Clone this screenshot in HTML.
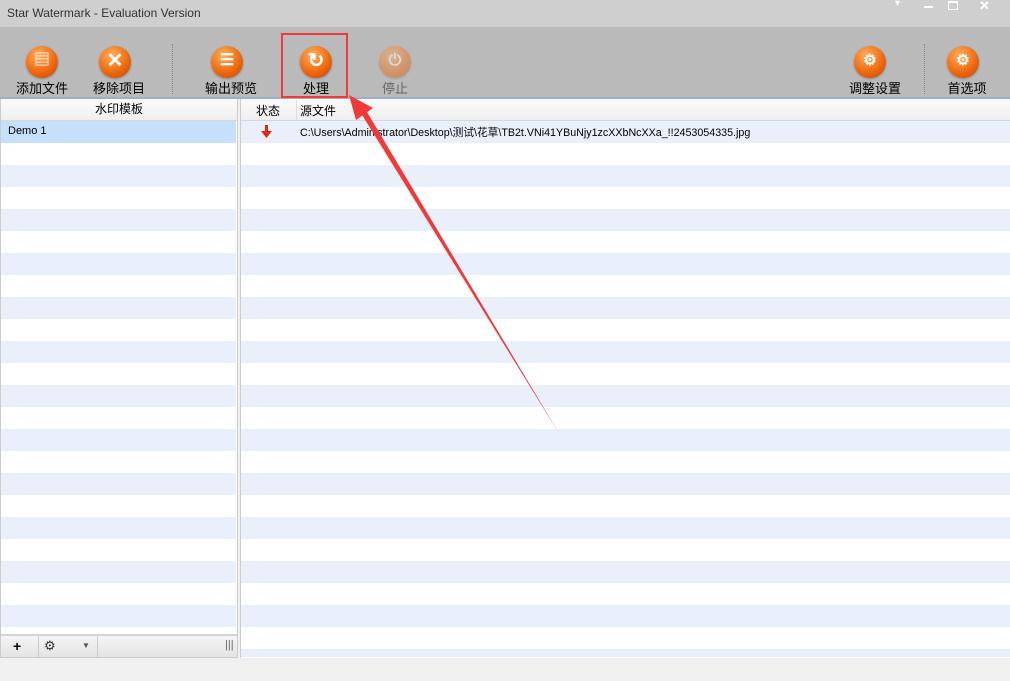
<!DOCTYPE html><html><head><meta charset="utf-8"><style>
*{margin:0;padding:0;box-sizing:border-box}
body{width:1010px;height:681px;overflow:hidden;background:#f0f0f0;font-family:"Liberation Sans","Noto Sans CJK SC",sans-serif;font-size:12px;color:#000;position:relative}
.abs{position:absolute}
.ic{position:absolute;width:32px;height:32px;border-radius:50%;background:radial-gradient(circle at 40% 30%,#ffb060,#f06a10 55%,#c84000);box-shadow:0 1px 2px rgba(0,0,0,.3);color:#fff;text-align:center;font-weight:bold}
.lb{position:absolute;top:78px;font-size:13px;text-align:center;width:80px}
.rows{position:absolute;background:repeating-linear-gradient(#e9f0fc 0 22px,#fff 22px 44px)}
.hdr{position:absolute;top:99px;height:22px;background:linear-gradient(#fafafa,#efefef);border-bottom:1px solid #d8d8d8;font-size:12px;line-height:21px}
</style></head><body>
<div class="abs" style="left:0;top:0;width:1010px;height:27px;background:#cfcfcf"></div>
<div class="abs" style="left:7px;top:6px;font-size:12px;color:#333">Star Watermark - Evaluation Version</div>
<div class="abs" style="left:895px;top:-2px;font-size:10px;color:#fff">▾</div>
<div class="abs" style="left:924px;top:6px;width:9px;height:2px;background:#fff"></div>
<div class="abs" style="left:948px;top:1px;width:10px;height:9px;border:1px solid #fff;border-top-width:2px"></div>
<div class="abs" style="left:979px;top:-2px;color:#fff;font-size:13px;font-weight:bold">✕</div>
<div class="abs" style="left:0;top:27px;width:1010px;height:70px;background:#bababa"></div>
<div class="abs" style="left:0;top:97px;width:1010px;height:2px;background:#9eb0c4"></div>
<div class="abs" style="left:172px;top:44px;height:50px;border-left:1px dotted #888"></div>
<div class="abs" style="left:924px;top:44px;height:50px;border-left:1px dotted #888"></div>
<div class="ic" style="left:26px;top:46px;font-size:16px;line-height:30px">▤</div>
<div class="ic" style="left:99px;top:46px;font-size:20px;line-height:31px">✕</div>
<div class="ic" style="left:211px;top:46px;font-size:16px;line-height:30px">☰</div>
<div class="ic" style="left:300px;top:46px;font-size:20px;line-height:31px">↻</div>
<div class="ic" style="left:379px;top:46px;opacity:.45;font-size:16px;line-height:30px">⏻</div>
<div class="ic" style="left:854px;top:46px;font-size:15px;line-height:30px">⚙</div>
<div class="ic" style="left:947px;top:46px;font-size:15px;line-height:30px">⚙</div>
<div class="lb" style="left:2px">添加文件</div>
<div class="lb" style="left:79px">移除项目</div>
<div class="lb" style="left:191px">输出预览</div>
<div class="lb" style="left:276px">处理</div>
<div class="lb" style="left:355px;color:#666">停止</div>
<div class="lb" style="left:835px">调整设置</div>
<div class="lb" style="left:927px">首选项</div>
<div class="abs" style="left:281px;top:33px;width:67px;height:65px;border:2px solid #f03a3a"></div>
<!-- left panel -->
<div class="abs" style="left:0;top:99px;width:238px;height:559px;background:#fff;border:1px solid #ccc"></div>
<div class="hdr" style="left:1px;width:236px;text-align:center">水印模板</div>
<div class="rows" style="left:1px;top:121px;width:235px;height:513px"></div>
<div class="abs" style="left:1px;top:121px;width:235px;height:22px;background:#c5e0fa;padding:4px 7px;font-size:11px">Demo 1</div>
<div class="abs" style="left:1px;top:634px;width:236px;height:23px;background:linear-gradient(#f4f4f4,#e4e4e4);border-top:2px solid #d4d4d4"></div>
<div class="abs" style="left:13px;top:638px;font-weight:bold;font-size:14px">+</div>
<div class="abs" style="left:38px;top:636px;height:21px;border-left:1px solid #ccc"></div>
<div class="abs" style="left:44px;top:638px;font-size:13px;color:#333">⚙</div>
<div class="abs" style="left:82px;top:641px;font-size:8px;color:#555">▼</div>
<div class="abs" style="left:97px;top:636px;height:21px;border-left:1px solid #ccc"></div>
<div class="abs" style="left:225px;top:639px;font-size:11px;color:#666">|||</div>
<!-- right panel -->
<div class="abs" style="left:240px;top:99px;width:770px;height:559px;background:#fff;border-left:1px solid #ccc"></div>
<div class="hdr" style="left:241px;width:769px"></div>
<div class="abs" style="left:256px;top:102px;font-size:12px">状态</div>
<div class="abs" style="left:296px;top:100px;height:20px;border-left:1px solid #ddd"></div>
<div class="abs" style="left:300px;top:102px;font-size:12px">源文件</div>
<div class="rows" style="left:241px;top:121px;width:769px;height:536px"></div>
<svg class="abs" style="left:261px;top:125px" width="12" height="14"><rect x="4" y="0" width="3" height="7" fill="#e02a10"/><polygon points="0,6 11,6 5.5,13" fill="#e02a10"/></svg>
<div class="abs" style="left:300px;top:125px;font-size:10.7px">C:\Users\Administrator\Desktop\测试\花草\TB2t.VNi41YBuNjy1zcXXbNcXXa_!!2453054335.jpg</div>
<svg class="abs" style="left:0;top:0" width="1010" height="681"><polygon points="560,435 359,110 364,107" fill="#f03a3a"/><polygon points="349,95 373,108 356,120" fill="#f03a3a"/></svg>
</body></html>
